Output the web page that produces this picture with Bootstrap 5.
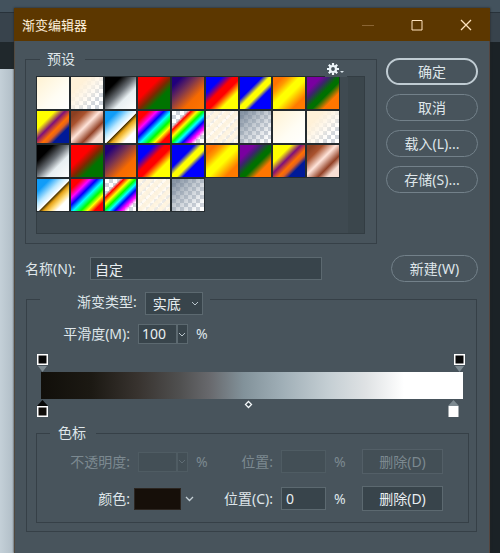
<!DOCTYPE html>
<html lang="zh-CN">
<head>
<meta charset="utf-8">
<meta name="viewport" content="width=device-width, initial-scale=1">
<title>渐变编辑器</title>
<link href="https://cdn.jsdelivr.net/npm/bootstrap@5.3.0/dist/css/bootstrap.min.css" rel="stylesheet">
<style>
:root{--panel:#48545c;--well:#38444b;--edge:#5c6970;--rule:#364047;--ink:#dfe6ea}
body{font:14px/20px "Noto Sans","Noto Sans CJK SC",sans-serif;color:var(--ink);min-height:100vh;padding:8px 10px 0 14px;
 background:
 linear-gradient(#43525d 0 12px,#28323a 12px 13px,#38434c 13px 42px,#1b2226 42px) right top/10px 100% no-repeat,
 linear-gradient(#43525d 0 12px,#28323a 12px 13px,#38434c 13px 42px,#20282c 42px 69px,transparent 69px),
 linear-gradient(90deg,#c4d0d8,#b0bdc6 14px)}
.editor{background:var(--panel);min-height:calc(100vh - 8px);border-left:1px solid #51493f;border-right:1px solid #55453f;box-shadow:0 0 2px #222}
.titlebar{background:#5c3700;height:33px;margin:0 -1px;color:#fff1dc}
.titlebar h1{font-size:13px;line-height:20px}
.titlebar button{width:49px;height:33px;color:#ffe3bd}
.titlebar button:first-of-type{color:#8a6534}
.bare{background:none;border:0;padding:0;color:inherit;display:flex;align-items:center;justify-content:center}
.frame{border:1px solid var(--rule);min-width:0}
.frame legend{float:none;width:auto;font-size:14px;line-height:20px;margin:0}
.presets{margin-left:10px;padding:7px 11px 9px 10px;height:195px}
.presets legend{margin-left:4px;padding:0 10px 0 7px}
.gear{right:29px;top:-8px;background:var(--panel);height:16px;width:22px}
.well{background:#3f4a51;border:1px solid #333d43;height:158px}
.rail{width:16px;background:#3b464c}
.swatches{display:grid;grid-template-columns:repeat(9,1fr);grid-auto-rows:32px;gap:2px;align-content:start;margin-right:9px}
.swatch{border:0;padding:0;outline:1px solid #242b2f}
.pill{height:27px;border:1px solid #73818a;border-radius:14px;background:none;color:var(--ink);padding:0;line-height:20px;width:92px;flex:none}
.pill.main{border:2px solid #c0ccd3}
.pill.new-one{width:87px}
.actions{gap:9px;padding:9px 11px 0 9px}
.namebar{padding:11px 11px 0 10px}
.namelab{width:65px;flex:none}
.namebar .field{margin-right:69px}
.field{background-color:var(--well);border:1px solid var(--edge);border-radius:0;color:#e8eef1;font-size:14px;line-height:20px;padding:0 4px;height:23px;min-width:0}
.field:focus{background-color:var(--well);color:#fff}
.field:disabled,.num .step:disabled{background-color:#434f56;border-color:#4f5c63}
.types{margin:10px 12px 0 11px;padding:0 7px 8px 9px}
.types>legend{height:14px;margin-left:4px;padding-right:7px;padding-left:37px;gap:8px}
.types>legend .form-select{width:58px;height:23px;padding:0 18px 0 7px;flex:none;
 background-image:url("data:image/svg+xml,%3Csvg xmlns='http://www.w3.org/2000/svg' viewBox='0 0 8 5'%3E%3Cpath d='M1 1l3 3 3-3' fill='none' stroke='%23b8c4cb'/%3E%3C/svg%3E");background-size:8px 5px;background-position:right 3px center;background-repeat:no-repeat}
.smooth{margin-top:18px;margin-bottom:10px}
.lab{width:94px;text-align:right;flex:none}
.num{width:50px;height:20px;flex:none}
.num .field{height:20px;padding:0 3px}
.num .step{width:15px;height:20px;background-color:var(--well);border:1px solid var(--edge);padding:0;color:#b8c4cb;display:flex;align-items:center;justify-content:center}
.ramp{height:27px;margin:0 6px 0 5px;background:linear-gradient(90deg,#110f0a,#1c1913 12%,#38332f 23%,#505050 33%,#68696d 40%,#82929a 48%,#9faeb6 57%,#c4ced3 68%,#dfe2e4 77%,#fff 86%)}
.handles{margin:0 4px 0 1px}
.handles.low{margin-right:10px;margin-bottom:6px}
.handles button{line-height:0}
.stops{padding:0 25px 11px 9px;height:100px}
.stops legend{margin-left:4px;padding:0 10px 0 8px}
.stops .row-line{height:37px}
.stops .lab{width:84px}
.pos{width:45px;flex:none}
.poslab{width:64px;text-align:right}
.del{background:var(--well);border:1px solid var(--edge);border-radius:0;color:#e8eef1;width:81px;height:25px;line-height:20px;padding:0;flex:none}
.del:disabled{background:#434f56;border-color:#535f67;color:#7c8990}
.off,.num .off{color:#7c8990}
.ink{width:47px;height:22px;background:#160f09;border:1px solid #2b2520;border-radius:0;padding:0;flex:none}
.ink::-webkit-color-swatch{border:0;border-radius:0}
.pct{width:12px}
/* preset gradients */
.checks{--ck:conic-gradient(#d0d5dc 25%,#fff 0 50%,#d0d5dc 0 75%,#fff 0) 0 0/8px 8px}
.g-cream{background:linear-gradient(135deg,#fff2d2,#fffdf4 60%,#fff)}
.g-cream-clear{background:linear-gradient(135deg,#fff1d8 25%,#fff6e8cc 48%,#fff0 78%),var(--ck)}
.g-bw{background:linear-gradient(135deg,#000 25%,#6c7278 48%,#e8eff2 66%,#fff)}
.g-rg{background:linear-gradient(135deg,#f00 35%,#7c2800 52%,#007400 68%)}
.g-vo{background:linear-gradient(135deg,#21007c 15%,#7b354f 40%,#f66a00 68%,#ff7400)}
.g-bry{background:linear-gradient(135deg,#00f 25%,#f00 43% 55%,#ff0 73%)}
.g-byb{background:linear-gradient(135deg,#0000f8 35%,#ff0 47% 57%,#00f 67%)}
.g-oyo{background:linear-gradient(135deg,#ff7200 15%,#ff9b00 26%,#ff0 42% 54%,#ff7a00 80%)}
.g-vgo{background:linear-gradient(135deg,#7a00a0 22%,#3c246c 34%,#007000 50% 58%,#ff7600 75%)}
.g-yvob{background:linear-gradient(135deg,#ff0 28%,#80107a 44%,#ff7000 58%,#e06020 65%,#001a98 75%)}
.g-copper{background:linear-gradient(135deg,#8c3f21 10%,#a9522e 25%,#ffe4da 46%,#934227 67%,#f8dfd4 82%)}
.g-chrome{background:linear-gradient(135deg,#109cf8 20%,#bce9ff 40%,#fff 52%,#4c3500 54%,#e5a115 60%,#ffdb75 70%,#fff 80%)}
.g-spec{background:linear-gradient(135deg,#f00 16%,#f0f 30%,#00f 41%,#0ff 53%,#0f0 65%,#ff0 75%,#f00 86%)}
.g-rain{background:linear-gradient(135deg,#fff0 24%,#f00 30%,#ff0 40%,#0f0 49%,#0ff 57%,#00f 66%,#f0f 76%,#fff0 86%),var(--ck)}
.g-stripe{background:repeating-linear-gradient(135deg,#fff4dfee 0 4px,#fff8ec99 5px 7px),var(--ck)}
.g-steel{background:linear-gradient(135deg,#66778bcc 5%,#8694a388 40%,#fff0 90%),var(--ck)}
</style>
</head>
<body>
<main class="editor">
 <header class="titlebar d-flex align-items-center">
  <h1 class="m-0 ps-2 fw-normal flex-grow-1">渐变编辑器</h1>
  <button class="bare" aria-label="最小化"><svg width="12" height="12"><path d="M0 6.500h12" stroke="currentColor"/></svg></button>
  <button class="bare" aria-label="最大化"><svg width="12" height="12"><path d="M1 1.500h10v9.500h-10z" fill="none" stroke="currentColor"/></svg></button>
  <button class="bare" aria-label="关闭"><svg width="12" height="12"><path d="M1 1l10 10M11 1l-10 10" stroke="currentColor" stroke-width="1.300"/></svg></button>
 </header>

 <div class="d-flex pt-2">
  <fieldset class="frame presets position-relative flex-grow-1">
   <legend>预设</legend>
   <button class="gear bare position-absolute" aria-label="预设选项"><svg width="18" height="12" viewBox="0 0 18 12"><g fill="none" stroke="#eef6fa"><circle cx="6" cy="6" r="3" stroke-width="2.200"/><path d="M6 0v2.500M6 9.500V12M0 6h2.500M9.500 6H12M1.800 1.800l1.700 1.700M8.500 8.500l1.700 1.700M10.200 1.800L8.500 3.500M3.500 8.500l-1.700 1.700" stroke-width="2.200"/></g><path d="M13 8h4l-2 2z" fill="#dce6eb"/></svg></button>
   <div class="well d-flex">
    <div class="swatches checks flex-grow-1">
     <button class="swatch g-cream" aria-label="预设 1"></button><button class="swatch g-cream-clear" aria-label="预设 2"></button><button class="swatch g-bw" aria-label="预设 3"></button><button class="swatch g-rg" aria-label="预设 4"></button><button class="swatch g-vo" aria-label="预设 5"></button><button class="swatch g-bry" aria-label="预设 6"></button><button class="swatch g-byb" aria-label="预设 7"></button><button class="swatch g-oyo" aria-label="预设 8"></button><button class="swatch g-vgo" aria-label="预设 9"></button>
     <button class="swatch g-yvob" aria-label="预设 10"></button><button class="swatch g-copper" aria-label="预设 11"></button><button class="swatch g-chrome" aria-label="预设 12"></button><button class="swatch g-spec" aria-label="预设 13"></button><button class="swatch g-rain" aria-label="预设 14"></button><button class="swatch g-stripe" aria-label="预设 15"></button><button class="swatch g-steel" aria-label="预设 16"></button><button class="swatch g-cream" aria-label="预设 17"></button><button class="swatch g-cream-clear" aria-label="预设 18"></button>
     <button class="swatch g-bw" aria-label="预设 19"></button><button class="swatch g-rg" aria-label="预设 20"></button><button class="swatch g-vo" aria-label="预设 21"></button><button class="swatch g-bry" aria-label="预设 22"></button><button class="swatch g-byb" aria-label="预设 23"></button><button class="swatch g-oyo" aria-label="预设 24"></button><button class="swatch g-vgo" aria-label="预设 25"></button><button class="swatch g-yvob" aria-label="预设 26"></button><button class="swatch g-copper" aria-label="预设 27"></button>
     <button class="swatch g-chrome" aria-label="预设 28"></button><button class="swatch g-spec" aria-label="预设 29"></button><button class="swatch g-rain" aria-label="预设 30"></button><button class="swatch g-stripe" aria-label="预设 31"></button><button class="swatch g-steel" aria-label="预设 32"></button>
    </div>
    <div class="rail"></div>
   </div>
  </fieldset>
  <div class="actions d-flex flex-column">
   <button class="pill main">确定</button>
   <button class="pill">取消</button>
   <button class="pill">载入(L)...</button>
   <button class="pill">存储(S)...</button>
  </div>
 </div>

 <div class="namebar d-flex align-items-center">
  <label for="gname" class="namelab text-nowrap">名称(N):</label>
  <input id="gname" class="form-control field" value="自定">
  <button class="pill new-one">新建(W)</button>
 </div>

 <fieldset class="frame types">
  <legend class="d-flex align-items-start">
   <label for="gtype" class="text-nowrap">渐变类型:</label>
   <select id="gtype" class="form-select field"><option>实底</option><option>杂色</option></select>
  </legend>
  <div class="d-flex align-items-center smooth">
   <label for="smoothness" class="lab">平滑度(M):</label>
   <div class="num d-flex ms-2"><input id="smoothness" class="form-control field" value="100"><button class="step" aria-label="平滑度滑块"><svg width="8" height="5"><path d="M1 1l3 3 3-3" fill="none" stroke="currentColor"/></svg></button></div>
   <span class="ms-2">%</span>
  </div>
  <div class="handles d-flex justify-content-between">
   <button class="bare" aria-label="不透明度色标 起点"><svg width="11" height="18"><path d="M1 12h9l-4.500 6z" fill="#7d8a91"/><path d="M.75.750h9.500v9.500h-9.500z" fill="#080808" stroke="#fff" stroke-width="1.500"/></svg></button>
   <button class="bare" aria-label="不透明度色标 终点"><svg width="11" height="18"><path d="M1 12h9l-4.500 6z" fill="#7d8a91"/><path d="M.75.750h9.500v9.500h-9.500z" fill="#080808" stroke="#fff" stroke-width="1.500"/></svg></button>
  </div>
  <div class="ramp"></div>
  <div class="handles low d-flex justify-content-between align-items-start">
   <button class="bare" aria-label="颜色色标 起点"><svg width="11" height="18"><path d="M0 7h11L5.500 1z" fill="#080808"/><path d="M.75 7.750h9.500v9.500h-9.500z" fill="#100d0a" stroke="#fff" stroke-width="1.500"/></svg></button>
   <button class="bare" aria-label="颜色中点"><svg width="9" height="10"><path d="M4.500 2.500l3 3-3 3-3-3z" fill="#38444b" stroke="#f3f7f9" stroke-width="1.300"/></svg></button>
   <button class="bare" aria-label="颜色色标 终点"><svg width="11" height="18"><path d="M0 7h11L5.500 1z" fill="#7d8a91"/><path d="M.5 7h10v11h-10z" fill="#fff"/></svg></button>
  </div>
  <fieldset class="frame stops">
   <legend>色标</legend>
   <div class="row-line d-flex align-items-center off">
    <label for="opacity" class="lab">不透明度:</label>
    <div class="num d-flex ms-2"><input id="opacity" class="form-control field" disabled><button class="step off" disabled aria-label="不透明度滑块"><svg width="8" height="5"><path d="M1 1l3 3 3-3" fill="none" stroke="#5f6c74"/></svg></button></div>
    <span class="ms-2 pct">%</span>
    <label for="pos1" class="poslab ms-auto">位置:</label>
    <input id="pos1" class="form-control field pos ms-2" disabled>
    <span class="ms-2 pct">%</span>
    <button class="del ms-3" disabled>删除(D)</button>
   </div>
   <div class="row-line d-flex align-items-center">
    <label for="stopcolor" class="lab">颜色:</label>
    <input id="stopcolor" type="color" class="ink ms-1" value="#160f09">
    <button class="bare ms-1" aria-label="颜色选项"><svg width="9" height="6"><path d="M1 1l3.500 3.500L8 1" fill="none" stroke="#c5d0d6" stroke-width="1.300"/></svg></button>
    <label for="pos2" class="poslab ms-auto">位置(C):</label>
    <input id="pos2" class="form-control field pos ms-2" value="0">
    <span class="ms-2 pct">%</span>
    <button class="del ms-3">删除(D)</button>
   </div>
  </fieldset>
 </fieldset>
</main>
<script src="https://cdn.jsdelivr.net/npm/bootstrap@5.3.0/dist/js/bootstrap.bundle.min.js"></script>
</body>
</html>
